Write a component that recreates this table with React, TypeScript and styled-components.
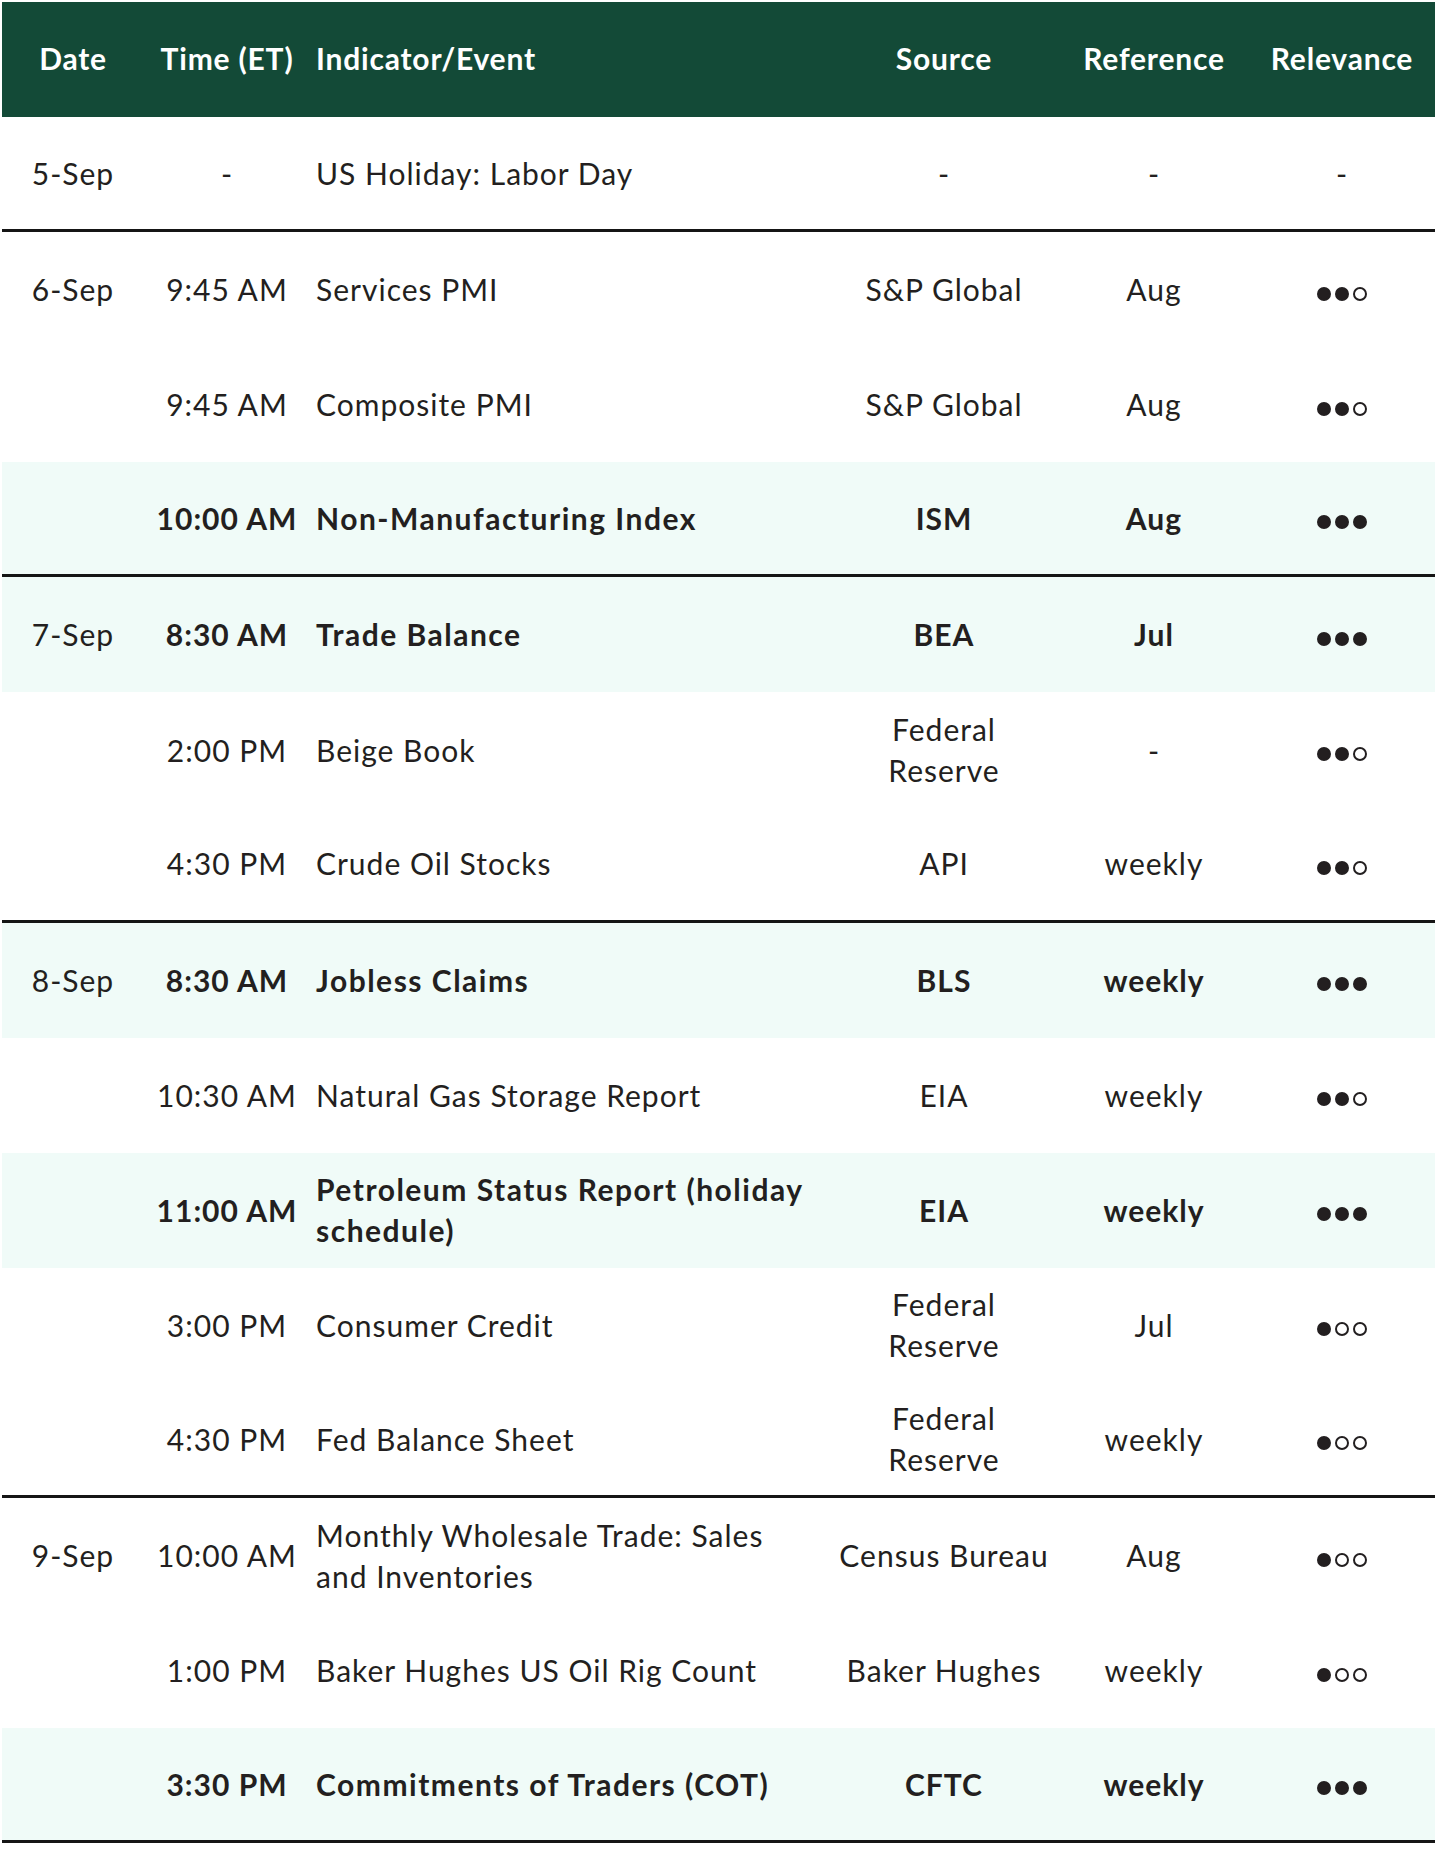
import React from "react";
import styled, { createGlobalStyle } from "styled-components";

const GlobalStyle = createGlobalStyle`
  html, body { margin: 0; padding: 0; background: #ffffff; }
  body { font-family: Lato, "Noto Sans", "DejaVu Sans", sans-serif; color: #231f20; }
`;

const COLS = "142px 166px 1fr 230px 190px 186px";
const ROW_H = 115.1;

const Page = styled.div`
  padding: 2px 3px 0 2px;
`;

const Table = styled.div`
  display: flex;
  flex-direction: column;
  width: 1433px;
`;

const HeaderRow = styled.div`
  display: grid;
  grid-template-columns: ${COLS};
  height: 115px;
  box-sizing: border-box;
  padding-bottom: 3px;
  align-items: center;
  background: #134a37;
  color: #ffffff;
  font-size: 30px;
  letter-spacing: 0.8px;
  font-weight: 700;
`;

const HeadCell = styled.div<{ $left?: boolean }>`
  text-align: ${(p) => (p.$left ? "left" : "center")};
  padding-left: ${(p) => (p.$left ? "6px" : "0")};
  white-space: nowrap;
`;

const Row = styled.div<{ $hl?: boolean; $end?: boolean }>`
  display: grid;
  grid-template-columns: ${COLS};
  height: ${ROW_H}px;
  box-sizing: border-box;
  align-items: center;
  background: ${(p) => (p.$hl ? "#f0fbf8" : "#ffffff")};
  border-bottom: ${(p) => (p.$end ? "3px solid #151515" : "none")};
  font-size: 30px;
  line-height: 41px;
  letter-spacing: 1px;
  font-weight: ${(p) => (p.$hl ? 700 : 400)};
`;

const Cell = styled.div<{ $left?: boolean; $plain?: boolean }>`
  text-align: ${(p) => (p.$left ? "left" : "center")};
  padding-left: ${(p) => (p.$left ? "6px" : "0")};
  font-weight: ${(p) => (p.$plain ? 400 : "inherit")};
  white-space: pre-line;
`;

const EventCell = styled(Cell)<{ $bold?: boolean }>`
  letter-spacing: ${(p) => (p.$bold ? "1.5px" : "1px")};
`;

const Dots = styled.div`
  display: flex;
  justify-content: center;
  align-items: center;
  gap: 4px;
  padding-top: 8px;
`;

const Dot = styled.span<{ $filled: boolean }>`
  display: block;
  width: 14px;
  height: 14px;
  box-sizing: border-box;
  border-radius: 50%;
  background: ${(p) => (p.$filled ? "#231f20" : "transparent")};
  border: 2px solid #231f20;
`;

type Ev = {
  date?: string;
  time: string;
  event: string;
  source: string;
  ref: string;
  rel: number;
  hl?: boolean;
  end?: boolean;
};

const rows: Ev[] = [
  { date: "5-Sep", time: "-", event: "US Holiday: Labor Day", source: "-", ref: "-", rel: 0, end: true },
  { date: "6-Sep", time: "9:45 AM", event: "Services PMI", source: "S&P Global", ref: "Aug", rel: 2 },
  { time: "9:45 AM", event: "Composite PMI", source: "S&P Global", ref: "Aug", rel: 2 },
  { time: "10:00 AM", event: "Non-Manufacturing Index", source: "ISM", ref: "Aug", rel: 3, hl: true, end: true },
  { date: "7-Sep", time: "8:30 AM", event: "Trade Balance", source: "BEA", ref: "Jul", rel: 3, hl: true },
  { time: "2:00 PM", event: "Beige Book", source: "Federal\nReserve", ref: "-", rel: 2 },
  { time: "4:30 PM", event: "Crude Oil Stocks", source: "API", ref: "weekly", rel: 2, end: true },
  { date: "8-Sep", time: "8:30 AM", event: "Jobless Claims", source: "BLS", ref: "weekly", rel: 3, hl: true },
  { time: "10:30 AM", event: "Natural Gas Storage Report", source: "EIA", ref: "weekly", rel: 2 },
  { time: "11:00 AM", event: "Petroleum Status Report (holiday\nschedule)", source: "EIA", ref: "weekly", rel: 3, hl: true },
  { time: "3:00 PM", event: "Consumer Credit", source: "Federal\nReserve", ref: "Jul", rel: 1 },
  { time: "4:30 PM", event: "Fed Balance Sheet", source: "Federal\nReserve", ref: "weekly", rel: 1, end: true },
  { date: "9-Sep", time: "10:00 AM", event: "Monthly Wholesale Trade: Sales\nand Inventories", source: "Census Bureau", ref: "Aug", rel: 1 },
  { time: "1:00 PM", event: "Baker Hughes US Oil Rig Count", source: "Baker Hughes", ref: "weekly", rel: 1 },
  { time: "3:30 PM", event: "Commitments of Traders (COT)", source: "CFTC", ref: "weekly", rel: 3, hl: true, end: true },
];

const Relevance: React.FC<{ level: number }> = ({ level }) =>
  level === 0 ? (
    <Cell>-</Cell>
  ) : (
    <Dots>
      {[0, 1, 2].map((i) => (
        <Dot key={i} $filled={i < level} />
      ))}
    </Dots>
  );

export default function App() {
  return (
    <Page>
      <GlobalStyle />
      <Table>
        <HeaderRow>
          <HeadCell>Date</HeadCell>
          <HeadCell>Time (ET)</HeadCell>
          <HeadCell $left>Indicator/Event</HeadCell>
          <HeadCell>Source</HeadCell>
          <HeadCell>Reference</HeadCell>
          <HeadCell>Relevance</HeadCell>
        </HeaderRow>
        {rows.map((r, i) => (
          <Row key={i} $hl={r.hl} $end={r.end}>
            <Cell $plain>{r.date ?? ""}</Cell>
            <Cell>{r.time}</Cell>
            <EventCell $left $bold={r.hl}>{r.event}</EventCell>
            <Cell>{r.source}</Cell>
            <Cell>{r.ref}</Cell>
            <Relevance level={r.rel} />
          </Row>
        ))}
      </Table>
    </Page>
  );
}
